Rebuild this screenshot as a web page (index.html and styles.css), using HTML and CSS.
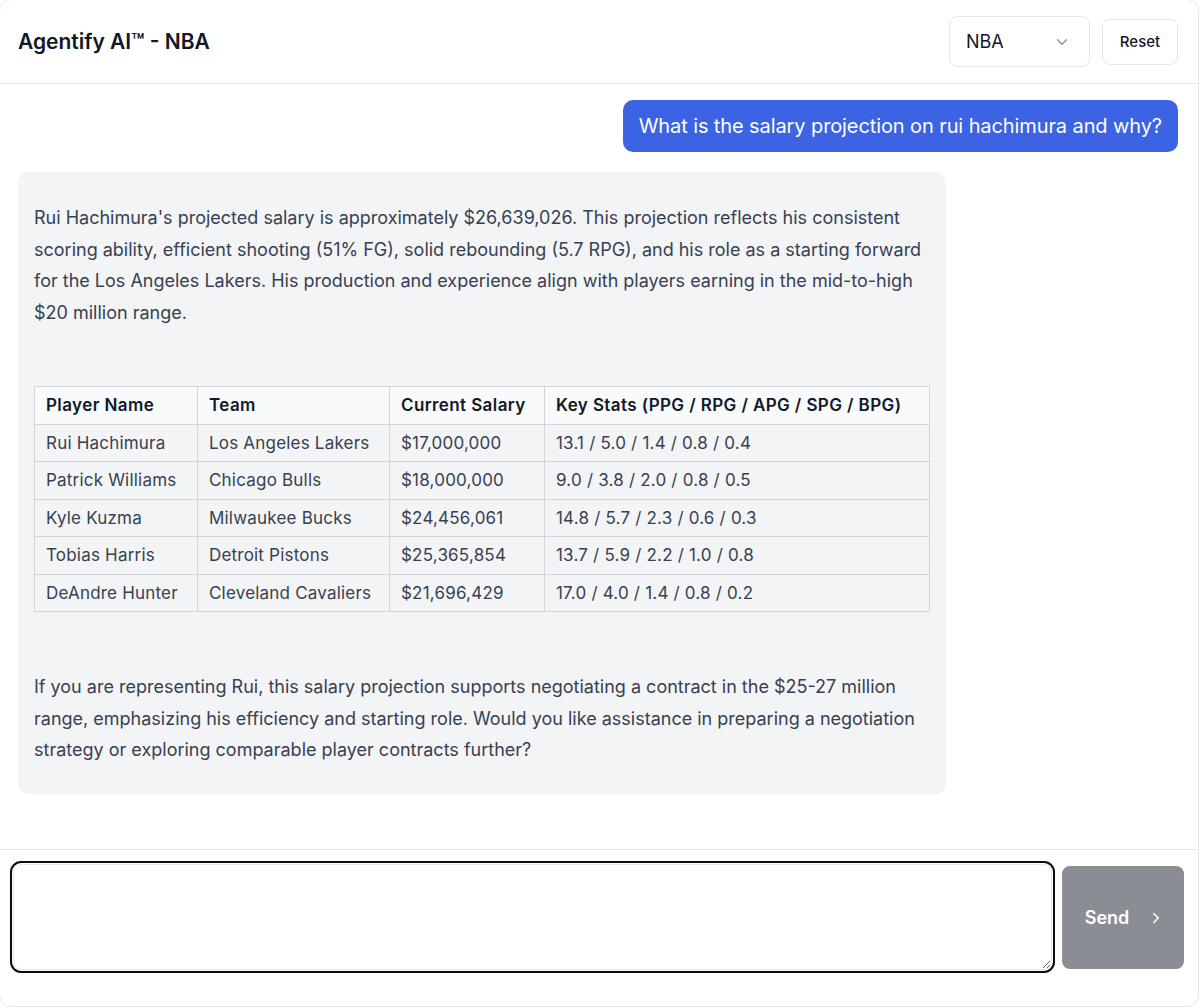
FILE: index.html
```html
<!DOCTYPE html>
<html lang="en">
<head>
    <meta charset="UTF-8">
    <meta name="viewport" content="width=device-width, initial-scale=1.0">
    <title>Agentify AI - NBA</title>
    <link rel="stylesheet" href="styles.css">
</head>
<body>
    <div class="card">
        <header class="topbar">
            <h1 class="title">Agentify AI™ - NBA</h1>
            <div class="controls">
                <div class="select">
                    <span>NBA</span>
                    <svg width="18" height="18" viewBox="0 0 24 24" fill="none" stroke="#8b909a" stroke-width="1.8" stroke-linecap="round" stroke-linejoin="round"><polyline points="6 9 12 15 18 9"/></svg>
                </div>
                <button class="reset">Reset</button>
            </div>
        </header>

        <main class="messages">
            <div class="msg user">What is the salary projection on rui hachimura and why?</div>

            <div class="msg bot">
                <p>Rui Hachimura's projected salary is approximately $26,639,026. This projection reflects his consistent scoring ability, efficient shooting (51% FG), solid rebounding (5.7 RPG), and his role as a starting forward for the Los Angeles Lakers. His production and experience align with players earning in the mid-to-high $20 million range.</p>

                <table class="stats">
                    <colgroup>
                        <col class="c-name">
                        <col class="c-team">
                        <col class="c-salary">
                        <col>
                    </colgroup>
                    <thead>
                        <tr><th>Player Name</th><th>Team</th><th>Current Salary</th><th>Key Stats (PPG / RPG / APG / SPG / BPG)</th></tr>
                    </thead>
                    <tbody>
                        <tr><td>Rui Hachimura</td><td>Los Angeles Lakers</td><td>$17,000,000</td><td>13.1 / 5.0 / 1.4 / 0.8 / 0.4</td></tr>
                        <tr><td>Patrick Williams</td><td>Chicago Bulls</td><td>$18,000,000</td><td>9.0 / 3.8 / 2.0 / 0.8 / 0.5</td></tr>
                        <tr><td>Kyle Kuzma</td><td>Milwaukee Bucks</td><td>$24,456,061</td><td>14.8 / 5.7 / 2.3 / 0.6 / 0.3</td></tr>
                        <tr><td>Tobias Harris</td><td>Detroit Pistons</td><td>$25,365,854</td><td>13.7 / 5.9 / 2.2 / 1.0 / 0.8</td></tr>
                        <tr><td>DeAndre Hunter</td><td>Cleveland Cavaliers</td><td>$21,696,429</td><td>17.0 / 4.0 / 1.4 / 0.8 / 0.2</td></tr>
                    </tbody>
                </table>

                <p>If you are representing Rui, this salary projection supports negotiating a contract in the $25-27 million range, emphasizing his efficiency and starting role. Would you like assistance in preparing a negotiation strategy or exploring comparable player contracts further?</p>
            </div>
        </main>

        <footer class="composer">
            <textarea class="input"></textarea>
            <button class="send">
                Send
                <svg width="18" height="18" viewBox="0 0 24 24" fill="none" stroke="#fff" stroke-width="2" stroke-linecap="round" stroke-linejoin="round"><polyline points="9 6 15 12 9 18"/></svg>
            </button>
        </footer>
    </div>
</body>
</html>
```

FILE: styles.css
```css
* {
    box-sizing: border-box;
}
html, body {
    margin: 0;
    overflow: hidden;
}
body {
    background: #fff;
    font-family: Inter, "Noto Sans", sans-serif;
    color: #111827;
}
.card {
    margin: -1px 0 0 -1px;
    width: 1200px;
    height: 1008px;
    border: 1px solid #e5e7eb;
    border-radius: 12px;
    display: flex;
    flex-direction: column;
    background: #fff;
}

/* header */
.topbar {
    height: 84px;
    flex: none;
    border-bottom: 1px solid #e5e7eb;
    display: flex;
    align-items: center;
    justify-content: space-between;
    padding: 0 20px 0 18px;
}
.title {
    margin: 0;
    font-size: 21px;
    font-weight: 600;
}
.controls {
    display: flex;
    align-items: center;
    gap: 12px;
}
.select {
    width: 141px;
    height: 51px;
    border: 1px solid #e5e7eb;
    border-radius: 8px;
    display: flex;
    align-items: center;
    justify-content: space-between;
    padding: 0 18px 0 16px;
    font-size: 18px;
}
.reset {
    width: 76px;
    height: 46px;
    border: 1px solid #e5e7eb;
    border-radius: 8px;
    background: #fff;
    font-family: inherit;
    font-size: 15px;
    font-weight: 500;
    color: #111827;
}

/* messages */
.messages {
    flex: 1;
    padding: 16px 20px 0 18px;
    display: flex;
    flex-direction: column;
    gap: 20px;
}
.msg {
    border-radius: 10px;
    max-width: 80%;
}
.user {
    align-self: flex-end;
    background: #3b63e4;
    color: #fff;
    font-size: 20px;
    letter-spacing: -0.1px;
    padding: 12px 16px;
    line-height: 28px;
}
.bot {
    align-self: flex-start;
    width: 80%;
    background: #f3f4f6;
    color: #374151;
    font-size: 18px;
    line-height: 31.5px;
    padding: 16px 16px 14px;
}
.bot p {
    margin: 14px 0;
}
.stats {
    width: 100%;
    border-collapse: collapse;
    table-layout: fixed;
    margin: 58px 0 59px;
    font-size: 17px;
    letter-spacing: 0.2px;
    line-height: 22.5px;
}
.c-name { width: 163px; }
.c-team { width: 192px; }
.c-salary { width: 155px; }
.stats th,
.stats td {
    border: 1px solid #d1d5db;
    padding: 7px 11px;
    text-align: left;
    white-space: nowrap;
}
.stats th {
    background: #f9fafb;
    color: #111827;
    font-weight: 600;
    letter-spacing: 0.4px;
}

/* composer */
.composer {
    height: 157px;
    flex: none;
    border-top: 1px solid #e5e7eb;
    display: flex;
    align-items: flex-start;
    gap: 10px;
    padding: 14px 14px 0 13px;
}
.input {
    flex: 1;
    height: 106px;
    border: 1px solid #e5e7eb;
    border-radius: 8px;
    outline: 2.5px solid #0b0b14;
    outline-offset: 1px;
    font-family: inherit;
    font-size: 17px;
    padding: 10px 14px;
    resize: vertical;
}
.send {
    margin-top: 2px;
    width: 122px;
    height: 103px;
    border: none;
    border-radius: 8px;
    background: #8a8d94;
    color: #fff;
    font-family: inherit;
    font-size: 18px;
    font-weight: 600;
    display: flex;
    align-items: center;
    justify-content: center;
    gap: 18px;
    padding: 0 0 0 4px;
}
```
